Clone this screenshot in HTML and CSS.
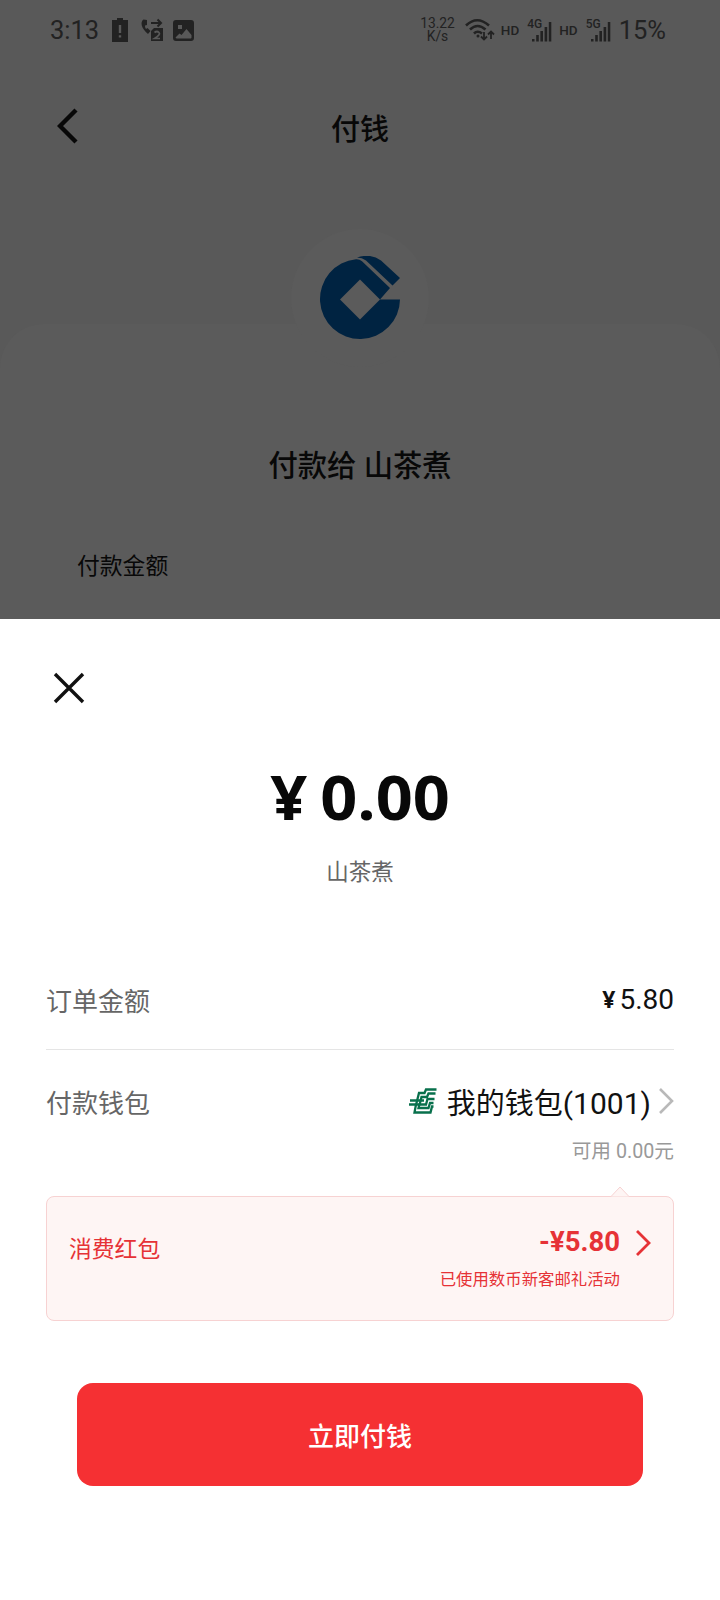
FILE: index.html
```html
<!DOCTYPE html>
<html lang="zh-CN">
<head>
<meta charset="utf-8">
<title>付钱</title>
<link rel="stylesheet" href="styles.css">
</head>
<body>
<main class="screen">
  <section class="backdrop">
    <header class="status">
      <div class="status-group">
        <span class="clock">3:13</span>
        <svg class="ic-battery" width="16" height="24" viewBox="0 0 16 24"><path fill="currentColor" fill-rule="evenodd" d="M5 0h6v2h5v22H0V2h5zM6.8 7v8h2.4V7zm0 10.2v2.4h2.4v-2.4z"/></svg>
        <svg class="ic-call" width="24" height="24" viewBox="0 0 24 24"><path d="M3.500 1.500C0 4 1 10 8 16l2.500-3-3-3-1.500 1C5 9.500 5 8.500 5 7.500l2-.5V2z" fill="currentColor"/><path d="M11 5h10M17.500 1.500 21 5l-3.500 3.500" fill="none" stroke="currentColor" stroke-width="2"/><path d="M14 10h9v13H11V13z" fill="currentColor"/><path d="M14.500 14.500q2.500-2 4.500 0t-4.500 6H20" fill="none" stroke="#595959" stroke-width="1.700"/></svg>
        <svg class="ic-photo" width="21" height="21" viewBox="0 0 21 21"><path fill="currentColor" fill-rule="evenodd" d="M3 0h15a3 3 0 0 1 3 3v15a3 3 0 0 1-3 3H3a3 3 0 0 1-3-3V3a3 3 0 0 1 3-3zM5 5v4h4V5zM2.500 17.500l4-4 2 1.500 5-6 5 6v2.500q0 1-1 1H3.500z"/></svg>
      </div>
      <div class="status-group">
        <span class="speed"><span>13.22</span><span>K/s</span></span>
        <svg class="ic-wifi" width="30" height="24" viewBox="0 0 30 24"><g fill="none" stroke="currentColor" stroke-width="2.600"><path d="M1 7.500Q12-3 24 7.500M5 11.500q7.500-7 15.500 0M9 15.500q3.500-3.500 8 0"/><path d="M19 14v7M16 18.500l3 3 3-3M26 21v-7M23 16.500l3-3 3 3" stroke-width="1.800"/></g><circle cx="13" cy="18" r="1.500" fill="currentColor"/></svg>
        <span class="hd">HD</span>
        <span class="signal"><span class="net">4G</span><svg width="20" height="20" viewBox="0 0 20 20" fill="currentColor"><path d="M0 17h2.500v2.500H0zM4.200 13h2.600v6.500H4.200zM8.400 9H11v10.500H8.400zM12.600 5h2.600v14.500h-2.600zM16.800 0h2.500v19.500h-2.500z"/></svg></span>
        <span class="hd hd-second">HD</span>
        <span class="signal"><span class="net">5G</span><svg width="20" height="20" viewBox="0 0 20 20" fill="currentColor"><path d="M0 17h2.500v2.500H0zM4.200 13h2.600v6.500H4.200zM8.400 9H11v10.500H8.400zM12.600 5h2.600v14.500h-2.600zM16.800 0h2.500v19.500h-2.500z"/></svg></span>
        <span class="percent">15%</span>
      </div>
    </header>
    <nav class="navbar">
      <svg class="back" width="22" height="36" viewBox="0 0 22 36"><path d="M19 2 3 18l16 16" fill="none" stroke="#080808" stroke-width="4.400"/></svg>
      <h1 class="nav-title">付钱</h1>
    </nav>
    <div class="payee-card">
      <div class="bank">
        <svg width="80" height="84" viewBox="0 0 80 84"><path fill="#002341" fill-rule="evenodd" d="M80 43.500A40 40 0 1 1 36 3.200q3.500-.2 6 2L70 32 60 43.500zM40 23.500 20 43.500l20 20 20-20z"/><path fill="#002341" d="M37 1.500Q51-3 61 4.500L80 22 72.500 29.500 46 4.500Q42 1.500 37 1.500z"/></svg>
      </div>
      <h2 class="payee">付款给 山茶煮</h2>
      <p class="payee-label">付款金额</p>
    </div>
  </section>

  <section class="sheet">
    <svg class="close" width="32" height="32" viewBox="0 0 32 32"><path d="M2 2l28 28M30 2 2 30" fill="none" stroke="#111" stroke-width="3.400"/></svg>
    <div class="total"><span class="total-yen">¥</span><span class="total-num">0.00</span></div>
    <p class="merchant">山茶煮</p>

    <div class="row row-order">
      <span class="label">订单金额</span>
      <span class="order-value"><span class="order-yen">¥</span>5.80</span>
    </div>
    <div class="row row-wallet">
      <span class="label">付款钱包</span>
      <span class="wallet">
        <svg class="wallet-logo" width="28" height="26" viewBox="0 0 28 26"><g fill="none" stroke="#08704c" stroke-width="2.300"><path d="M27.500 1.500H17L15.500 5H10L7 17"/><path d="M26.500 5.500H19.500L18 9H12.500L10.500 17"/><path d="M1 12.500h14M0 16.500h14"/><path d="M25.500 11h-7l-1.500 5.500h-3"/><path d="M24.500 15h-3.500l-1.500 5H9.500l1-4"/><path d="M7 16.500 5.500 24.500h16l1.500-6h1.500"/></g></svg>
        <span class="wallet-name">我的钱包<span class="wallet-no">(1001)</span></span>
        <svg class="wallet-arrow" width="16" height="28" viewBox="0 0 16 28"><path d="M2 2l12 12L2 26" fill="none" stroke="#b9b9b9" stroke-width="2.600"/></svg>
      </span>
    </div>
    <p class="available">可用 0.00元</p>

    <div class="coupon">
      <svg class="coupon-tip" width="18" height="11" viewBox="0 0 18 11"><path d="M0 10.500 9 1l9 9.500" fill="#fef5f4" stroke="#f7d2d2"/></svg>
      <span class="coupon-label">消费红包</span>
      <div class="coupon-detail">
        <strong class="coupon-value">-¥5.80</strong>
        <span class="coupon-note">已使用数币新客邮礼活动</span>
      </div>
      <svg class="coupon-arrow" width="16" height="28" viewBox="0 0 16 28"><path d="M2 2l12 12L2 26" fill="none" stroke="#e63236" stroke-width="2.800"/></svg>
    </div>

    <button class="pay" type="button">立即付钱</button>
  </section>
</main>
</body>
</html>
```
FILE: styles.css
```css
* { box-sizing: border-box; }
body {
  margin: 0;
  font-family: Roboto, "Noto Sans CJK SC", sans-serif;
  color: #111;
}
h1, h2, p { margin: 0; }
svg { display: block; flex: none; }
.screen { width: 720px; height: 1600px; overflow: hidden; background: #fff; }

.backdrop { height: 619px; background: #595959; overflow: hidden; }
.status {
  display: flex;
  justify-content: space-between;
  height: 60px;
  padding: 0 54px 0 50px;
  color: #222;
}
.status-group { display: flex; align-items: center; }
.clock { font-size: 25.500px; }
.ic-battery { margin-left: 13px; }
.ic-call { margin-left: 12px; }
.ic-photo { margin-left: 9px; }
.speed {
  display: flex;
  flex-direction: column;
  align-items: center;
  font-size: 13.800px;
  line-height: 13px;
}
.ic-wifi { margin-left: 10px; }
.hd { margin-left: 6px; font-size: 13.500px; font-weight: 500; }
.hd-second { margin-left: 7px; }
.signal { display: flex; align-items: flex-end; width: 25px; margin-left: 8px; position: relative; justify-content: flex-end; height: 23px; }
.net { position: absolute; left: 0; top: 0; font-size: 12px; line-height: 11px; font-weight: 500; }
.percent { margin-left: 8px; font-size: 25.500px; }

.navbar {
  display: grid;
  grid-template-columns: 1fr auto 1fr;
  align-items: center;
  height: 136px;
  padding: 0 57px;
}
.back { margin-top: -4px; }
.nav-title { margin-top: 3px; font-size: 29px; font-weight: 500; line-height: 40px; color: #080808; }

.payee-card {
  display: flex;
  flex-direction: column;
  align-items: center;
  height: 296px;
  margin-top: 128px;
  border-radius: 44px 44px 0 0;
  background: #5b5b5b;
}
.bank {
  display: flex;
  align-items: center;
  justify-content: center;
  width: 138px;
  height: 138px;
  margin-top: -95px;
  border-radius: 50%;
  background: #5b5b5b;
  flex: none;
}
.payee { margin-top: 78px; font-size: 29.300px; line-height: 42px; font-weight: 500; color: #080808; }
.payee-label { align-self: flex-start; margin: 63px 0 0 77px; font-size: 22.800px; line-height: 34px; color: #080808; }

.sheet { padding: 53px 46px 0; }
.close { margin-left: 7px; }
.total {
  display: flex;
  justify-content: center;
  align-items: baseline;
  gap: 12px;
  margin-top: 53px;
  height: 81px;
  line-height: 80px;
  font-family: "Open Sans", "Noto Sans", sans-serif;
  font-weight: 750;
  color: #080808;
  transform: scaleX(1.08);
}
.total-yen, .total-num { font-size: 60px; }
.merchant { margin-top: 17px; text-align: center; font-size: 22.500px; line-height: 34px; color: #666; }

.row { display: flex; align-items: center; justify-content: space-between; }
.row-order { height: 97px; margin-top: 64px; padding-bottom: 3px; border-bottom: 1px solid #e5e5e5; }
.label { font-size: 26px; color: #666; }
.order-value { font-size: 28px; }
.order-yen { position: relative; top: -1px; margin-right: 4px; font-family: "Noto Sans", sans-serif; font-size: 23px; font-weight: 700; }
.row-wallet { height: 104px; padding-bottom: 2px; }
.wallet { display: flex; align-items: center; }
.wallet-name { margin-left: 10px; font-size: 29px; }
.wallet-no { font-size: 30px; }
.wallet-arrow { margin-left: 7px; }
.available { margin-top: -16px; text-align: right; font-size: 19.700px; line-height: 28px; color: #999; }

.coupon {
  position: relative;
  display: flex;
  height: 125px;
  margin-top: 30px;
  padding: 0 22px;
  border: 1px solid #f7d2d2;
  border-radius: 8px;
  background: #fef5f4;
  color: #e63236;
}
.coupon-tip { position: absolute; top: -11px; right: 44px; }
.coupon-label { margin-top: 35px; font-size: 22.800px; line-height: 36px; }
.coupon-detail { display: flex; flex-direction: column; align-items: flex-end; margin: 28px 0 0 auto; }
.coupon-value { font-size: 27.500px; line-height: 34px; }
.coupon-note { margin-top: 9px; font-size: 16.400px; line-height: 24px; }
.coupon-arrow { margin: 32px 0 0 15px; }

.pay {
  display: block;
  width: 566px;
  height: 103px;
  margin: 62px auto 0;
  padding: 0;
  border: 0;
  border-radius: 16px;
  background: #f53033;
  color: #fff;
  font: 500 26px/102px "Noto Sans CJK SC", sans-serif;
}
```
